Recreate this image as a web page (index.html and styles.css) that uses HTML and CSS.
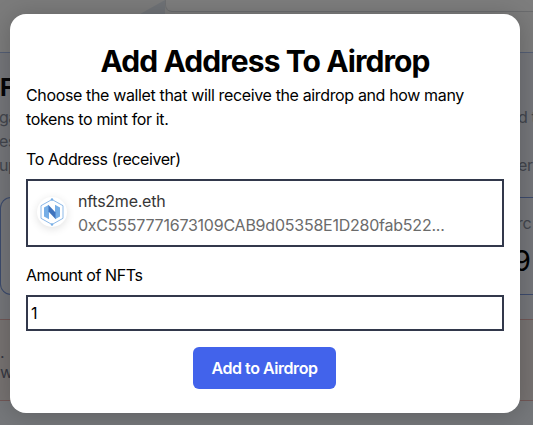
FILE: index.html
```
<!DOCTYPE html>
<html lang="en">

<head>
    <meta charset="UTF-8">
    <meta name="viewport" content="width=device-width, initial-scale=1.0">
    <title>Add Address To Airdrop</title>
    <link rel="stylesheet" href="styles.css">
</head>

<body>
    <div class="page">
        <div class="topbar">
            <svg class="fold" width="25" height="14" viewBox="0 0 25 14"><path d="M0 14 25 0V14Z" fill="#dfe5ec"/></svg>
            <div class="tab"></div>
        </div>
        <div class="panel">
            <h2>F</h2>
            <div class="row"><span>ga</span><span class="end">d t</span></div>
            <div class="row"><span>es</span></div>
            <div class="row"><span>up</span><span class="end">er</span></div>
            <div class="stats">
                <div class="stat-label">rc</div>
                <div class="stat-value">9</div>
            </div>
        </div>
        <div class="warning">
            <div>.</div>
            <div>w</div>
        </div>
    </div>

    <div class="overlay">
        <div class="modal">
            <h1>Add Address To Airdrop</h1>
            <p class="intro">Choose the wallet that will receive the airdrop and how many tokens to mint for it.</p>

            <div class="label">To Address (receiver)</div>
            <div class="address-box">
                <div class="avatar">
                    <svg width="24" height="28" viewBox="0 0 24 28">
                        <path d="M12 1.5 23 7.7V20.3L12 26.5 1 20.3V7.7Z" fill="none" stroke="#8db9e8" stroke-width="1"/>
                        <path d="M4 9.5 9 6.8V21.2L4 18.5Z" fill="#76aee6"/>
                        <path d="M15 6.8 20 9.5V18.5L15 21.2Z" fill="#76aee6"/>
                        <path d="M8.5 7 15.5 14.5V21L8.5 13.5Z" fill="#3f73bd"/>
                        <circle cx="12" cy="1.5" r="1.2" fill="#76aee6"/>
                        <circle cx="12" cy="26.5" r="1.2" fill="#76aee6"/>
                    </svg>
                </div>
                <div class="address-text">
                    <div class="name">nfts2me.eth</div>
                    <div class="hash">0xC5557771673109CAB9d05358E1D280fab522...</div>
                </div>
            </div>

            <label class="label" for="amount">Amount of NFTs</label>
            <input class="amount" id="amount" type="text" value="1">

            <button class="submit">Add to Airdrop</button>
        </div>
    </div>
</body>

</html>
```
FILE: styles.css
```
* {
    box-sizing: border-box;
}

body {
    margin: 0;
    height: 425px;
    overflow: hidden;
    font-family: Inter, "Liberation Sans", sans-serif;
    font-size: 16px;
    line-height: 24px;
    letter-spacing: -0.36px;
    color: #000;
    background-color: #f0f1f2;
}

.page {
    height: 425px;
    overflow: hidden;
    background-color: #eaeff4;
}

.topbar {
    display: flex;
    height: 52px;
    background-color: #f6f7f7;
}

.fold {
    margin-left: 140px;
}

.tab {
    flex: 1;
    height: 12px;
    border-left: 1px solid #dcdfe3;
    border-bottom: 1px solid #d4d6da;
    border-bottom-left-radius: 7px;
    background-color: #fbfbfb;
}

.panel {
    height: 267px;
    padding-top: 20px;
    border-top: 1px solid #a9bce8;
    background-color: #e8ebf2;
}

.panel h2 {
    margin: 0;
    height: 32px;
    font-size: 24px;
    line-height: 30px;
    font-weight: 700;
    color: #0a0a0f;
}

.row {
    display: flex;
    height: 24px;
    margin-left: -1px;
    color: #858b9b;
}

.end {
    width: 15px;
    margin-left: auto;
    white-space: nowrap;
}

.stats {
    display: flex;
    flex-direction: column;
    align-items: flex-end;
    height: 98px;
    margin-top: 20px;
    padding-top: 13px;
    border: 1px solid #7895d8;
    border-right: 0;
    border-radius: 11px 0 0 11px;
}

.stat-label {
    width: 16px;
    color: #858b9b;
}

.stat-value {
    width: 20px;
    font-size: 29px;
    line-height: 52px;
}

.warning {
    height: 82px;
    padding-top: 22px;
    line-height: 20px;
    color: #6d7085;
    border-top: 1px solid #e0aeac;
    border-bottom: 1px solid #e0aeac;
    background-color: #ece4e2;
}

.overlay {
    position: absolute;
    inset: 0;
    padding: 14px 13px 12px 10px;
    background-color: rgba(0, 0, 0, 0.5);
}

.modal {
    display: flex;
    flex-direction: column;
    height: 399px;
    padding: 29px 16px 24px;
    border-radius: 16px;
    background-color: #fff;
    box-shadow: 0 2px 24px rgba(0, 0, 0, 0.2);
}

.modal h1 {
    margin: 0;
    font-size: 30px;
    line-height: 36px;
    font-weight: 700;
    letter-spacing: -0.92px;
    text-align: center;
}

.intro {
    margin: 4px 0 16px;
}

.label {
    height: 24px;
    margin-bottom: 8px;
    letter-spacing: -0.42px;
}

.address-box {
    display: flex;
    align-items: center;
    height: 68px;
    margin-bottom: 16px;
    padding-left: 9px;
    border: 2px solid #32384b;
}

.avatar {
    display: flex;
    align-items: center;
    justify-content: center;
    width: 30px;
    height: 30px;
    margin: 0 11px 2px 0;
    border-radius: 50%;
    box-shadow: 0 2px 9px rgba(0, 0, 0, 0.12);
}

.name {
    letter-spacing: -0.25px;
    color: #363636;
}

.hash {
    letter-spacing: -0.23px;
    color: #6b6b6b;
}

.amount {
    height: 36px;
    padding: 0 3px;
    border: 2px solid #32384b;
    border-radius: 0;
    font: inherit;
    color: #000;
}

.submit {
    align-self: center;
    width: 143px;
    height: 42px;
    margin: 16px 1px 0 0;
    padding: 0;
    border: 0;
    border-radius: 6px;
    background-color: #4263eb;
    color: #fff;
    font: inherit;
    font-weight: 600;
    letter-spacing: -0.45px;
}
```
